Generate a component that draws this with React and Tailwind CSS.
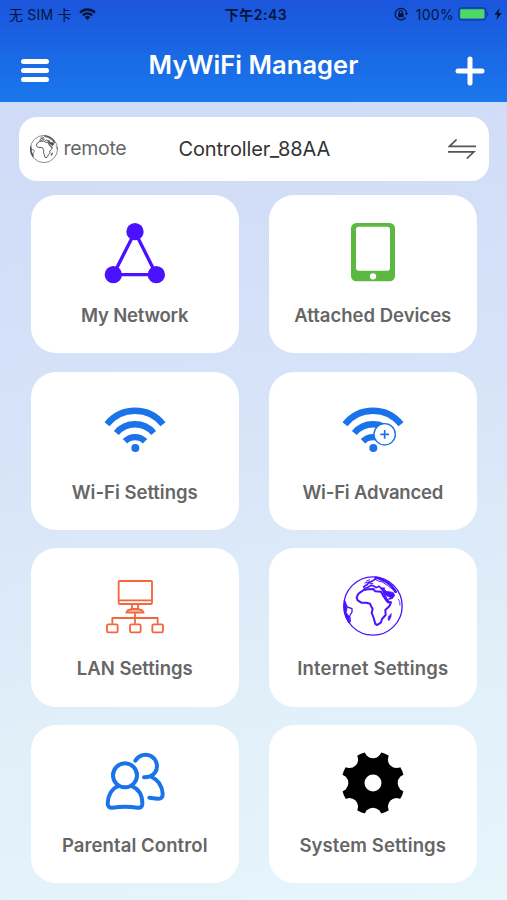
import { useId } from 'react';

function Globe({ className }) {
  const clip = useId();
  return (
    <svg viewBox="0 0 180 180" className={className} fill="none" stroke="currentColor" strokeLinejoin="round" strokeLinecap="round">
      <clipPath id={clip}>
        <circle cx="90" cy="90" r="89" />
      </clipPath>
      <circle cx="90" cy="90" r="87.5" strokeWidth="4" />
      <g clipPath={`url(#${clip})`} strokeWidth="6">
        {/* Africa */}
        <path d="M52 49 62 42 76 40 91 39 97 46 114 47 120 58 130 73 135 79 144 79 139 91 127 102 128 117 117 129 114 139 103 147 97 144 92 126 86 110 89 99 84 90 81 83 70 80 55 80 44 73 41 65 45 55Z" />
        {/* Europe and Asia */}
        <path d="M62 33 68 28 73 26 77 19 87 16 95 10 104 6M64 38 76 33 84 28 92 30 99 35 108 31 116 37 124 37" strokeWidth="5" />
        <path d="M71 15 80 11M66 21 73 19M80 23 90 23" strokeWidth="3" />
        <path d="M98 3 114 10 130 17 145 29 158 47" strokeWidth="8" />
        <path d="M95 9 106 15 118 18 133 28 147 38 160 48" strokeWidth="3" />
        <path d="M112 36 123 39 130 46 140 47 152 50 154 58 146 66 137 62 129 58 121 49Z" fill="currentColor" strokeWidth="2" />
        <path d="M121 50 131 68 138 77M154 58 147 67 138 69" strokeWidth="4.5" />
        <path d="M166 70 170 77 171 88" strokeWidth="2.5" />
        {/* Madagascar */}
        <path d="M145 113 144 123 138 134 135 131 136 122Z" fill="currentColor" strokeWidth="1.5" />
        {/* South America */}
        <path d="M4 72 9 85 13 93 27 98 27 108 20 120 22 135 17 142 4 125Z" strokeWidth="4" />
        <path d="M2 72 9 86 12 98 10 110 18 121 20 143 2 124Z" fill="currentColor" strokeWidth="2" />
      </g>
    </svg>
  );
}

function NetworkIcon() {
  return (
    <svg viewBox="0 0 180 180" className="size-15 overflow-visible text-[#4a12ff]" fill="currentColor">
      <path d="M90 27 25 155H154Z" fill="none" stroke="currentColor" strokeWidth="10" />
      <circle cx="90" cy="26" r="26" />
      <circle cx="25" cy="155" r="26" />
      <circle cx="154" cy="155" r="26" />
    </svg>
  );
}

function TabletIcon() {
  return (
    <svg viewBox="0 0 180 180" className="size-15 overflow-visible">
      <rect x="24" y="0" width="132" height="175" rx="16" fill="#5cb840" />
      <rect x="39" y="11" width="102" height="132" rx="8" fill="#fff" />
      <circle cx="90" cy="160" r="9.5" fill="#fff" />
    </svg>
  );
}

function WifiIcon({ advanced }) {
  return (
    <svg viewBox="0 0 180 180" className="size-15 overflow-visible text-[#1a73e8]" fill="none" stroke="currentColor" strokeWidth="19">
      <path d="M6 73A107 107 0 0 1 174 73" />
      <path d="M34 99A73 73 0 0 1 146 99" />
      <path d="M60 124A42 42 0 0 1 120 124" />
      <circle cx="91" cy="144" r="12" fill="currentColor" stroke="none" />
      {advanced && (
        <g strokeWidth="4">
          <circle cx="125" cy="103" r="32" fill="#fff" />
          <path d="M112 103H138M125 90V116" strokeWidth="5" />
        </g>
      )}
    </svg>
  );
}

function LanIcon() {
  return (
    <svg viewBox="0 0 180 180" className="size-15 overflow-visible text-[#f4673c]" fill="none" stroke="currentColor" strokeWidth="5.5" strokeLinejoin="round">
      <rect x="41" y="15" width="100" height="69" rx="3" />
      <path d="M42 73H140M81 84V99M99 84V99M90 112V143M22 143V126H158V143" />
      <path d="M81 99H99L112 103 116 110H64L68 103Z" fill="#f9b49f" />
      <rect x="6" y="145" width="32" height="24" rx="4" />
      <rect x="75" y="145" width="32" height="24" rx="4" />
      <rect x="142" y="145" width="32" height="24" rx="4" />
    </svg>
  );
}

function PeopleIcon() {
  return (
    <svg viewBox="0 0 180 180" className="size-15 overflow-visible text-[#1a73e8]" fill="none" stroke="currentColor" strokeWidth="12" strokeLinecap="round" strokeLinejoin="round">
      <circle cx="60" cy="67" r="36" />
      <path d="M40 99C20 107 9 128 8 151 8 160 13 165 22 164 43 161 77 161 98 164 108 165 113 160 112 151 112 128 101 108 80 99" />
      <path d="M91 23C101 6 122 0 139 10 157 21 161 45 149 60 141 70 128 73 117 73" />
      <path d="M140 72C160 81 171 101 173 121 174 133 168 138 158 137L133 134" />
    </svg>
  );
}

function GearIcon() {
  const notches = [0, 45, 90, 135, 180, 225, 270, 315];
  return (
    <svg viewBox="0 0 180 180" className="size-15 overflow-visible">
      <circle cx="90" cy="90" r="95" fill="#000" />
      {notches.map(a => (
        <circle key={a} cx="190" cy="90" r="26" fill="#fff" transform={`rotate(${a} 90 90)`} />
      ))}
      <circle cx="90" cy="90" r="25.5" fill="#fff" />
    </svg>
  );
}

const tiles = [
  { label: 'My Network', icon: <NetworkIcon />, tracking: '-tracking-[0.2px]' },
  { label: 'Attached Devices', icon: <TabletIcon /> },
  { label: 'Wi-Fi Settings', icon: <WifiIcon /> },
  { label: 'Wi-Fi Advanced', icon: <WifiIcon advanced />, tracking: '-tracking-[0.2px]' },
  { label: 'LAN Settings', icon: <LanIcon /> },
  { label: 'Internet Settings', icon: <Globe className="size-15 text-[#4a12ff]" />, tracking: 'tracking-[0.18px]' },
  { label: 'Parental Control', icon: <PeopleIcon />, tracking: 'tracking-[0.1px]' },
  { label: 'System Settings', icon: <GearIcon />, tracking: 'tracking-[0.1px]' },
];

function StatusBar() {
  return (
    <div className="grid h-7 grid-cols-[1fr_auto_1fr] items-center pl-[9px] pr-[5px] text-[14px] text-[#07143a]">
      <div className="flex items-center gap-[7px]">
        <span className="whitespace-nowrap tracking-[0.2px]">无 SIM 卡</span>
        <svg viewBox="0 0 17 12" className="h-3 w-[17px]" fill="none" stroke="currentColor" strokeWidth="2.3">
          <path d="M1 4.6A10.6 10.6 0 0 1 16 4.6M3.8 7.4A6.6 6.6 0 0 1 13.2 7.4" />
          <path d="M8.5 12 5.7 9.2A4 4 0 0 1 11.3 9.2Z" fill="currentColor" stroke="none" />
        </svg>
      </div>
      <span className="pl-px font-semibold tracking-[0.5px]">下午2:43</span>
      <div className="flex items-center justify-end">
        <svg viewBox="0 0 14 14" className="mr-2 size-3.5" fill="none" stroke="currentColor" strokeWidth="1.2">
          <path d="M11.6 10.6A5.8 5.8 0 1 1 12.7 6.2" />
          <path d="M10.8 6H14L12.5 8.6Z" fill="currentColor" stroke="none" />
          <rect x="4" y="6.3" width="5.6" height="4" rx="0.6" fill="currentColor" stroke="none" />
          <path d="M5.2 6.5V5.2A1.6 1.6 0 0 1 8.4 5.2V6.5" />
        </svg>
        <span className="mr-1 tracking-[0.3px]">100%</span>
        <svg viewBox="0 0 31 14" className="mr-[5px] h-3.5 w-[31px]">
          <rect x="0.8" y="0.8" width="27" height="12" rx="3" fill="none" stroke="#123a9c" strokeWidth="1.3" />
          <rect x="2.2" y="2.2" width="24.2" height="9.4" rx="1.2" fill="#4cd964" />
          <path d="M29 5V9A2.3 2.3 0 0 0 29 5Z" fill="#123a9c" />
        </svg>
        <svg viewBox="0 0 8 12" className="h-3 w-2" fill="currentColor">
          <path d="M5.6 0 0.4 6.8H3.4L2.3 12 7.7 4.9H4.6Z" />
        </svg>
      </div>
    </div>
  );
}

export default function App() {
  return (
    <div className="h-[900px] w-[507px] overflow-hidden bg-linear-[170deg,#d0dcf7_15%,#d6e3f8_45%,#e1eff9_75%,#e6f6fb_100%] font-['Inter','Noto_Sans_CJK_SC',sans-serif]">
      <header className="h-[102px] bg-linear-to-b from-[#1b55dc] to-[#1a78ec]">
        <StatusBar />
        <div className="flex items-start justify-between pl-[21px] pr-[22px] pt-[21px] text-white">
          <button className="mt-[10px] flex w-7 flex-col gap-1">
            <span className="h-[5px] rounded-full bg-white" />
            <span className="h-[5px] rounded-full bg-white" />
            <span className="h-[5px] rounded-full bg-white" />
          </button>
          <h1 className="pl-[3px] text-[25.5px] font-semibold leading-8 tracking-[0.05px]">MyWiFi Manager</h1>
          <button className="mt-[7px]">
            <svg viewBox="0 0 30 30" className="size-[30px]" stroke="currentColor" strokeWidth="5" strokeLinecap="round">
              <path d="M3 15H27M15 3V27" />
            </svg>
          </button>
        </div>
      </header>

      <main>
        <div className="mx-auto mt-[15px] flex h-[63.5px] w-[470px] items-center rounded-[18px] bg-white pl-[11px] pr-[13px] text-[20px]">
          <Globe className="size-7 text-[#4c4c4c]" />
          <span className="ml-[6px] w-[115px] text-[19.5px] tracking-[-0.3px] text-[#666]">remote</span>
          <span className="flex-1 tracking-[-0.15px] text-[#333]">Controller_88AA</span>
          <svg viewBox="0 0 28 20" className="h-5 w-7" fill="none" stroke="#555" strokeWidth="1.7">
            <path d="M8.6 0.5 1.5 7.3H28M0 12.8H26L18.8 19.5" />
          </svg>
        </div>

        <div className="ml-[31px] mt-[14.5px] grid grid-cols-[207.5px_207.5px] gap-x-[30.5px] gap-y-[18.5px]">
          {tiles.map(t => (
            <div key={t.label} className="flex h-[158.2px] flex-col items-center rounded-[25px] bg-white pt-[28px]">
              {t.icon}
              <span className={`mt-[20px] whitespace-nowrap text-[18.5px] font-semibold leading-6 text-[#666] ${t.tracking || ''}`}>{t.label}</span>
            </div>
          ))}
        </div>
      </main>
    </div>
  );
}
